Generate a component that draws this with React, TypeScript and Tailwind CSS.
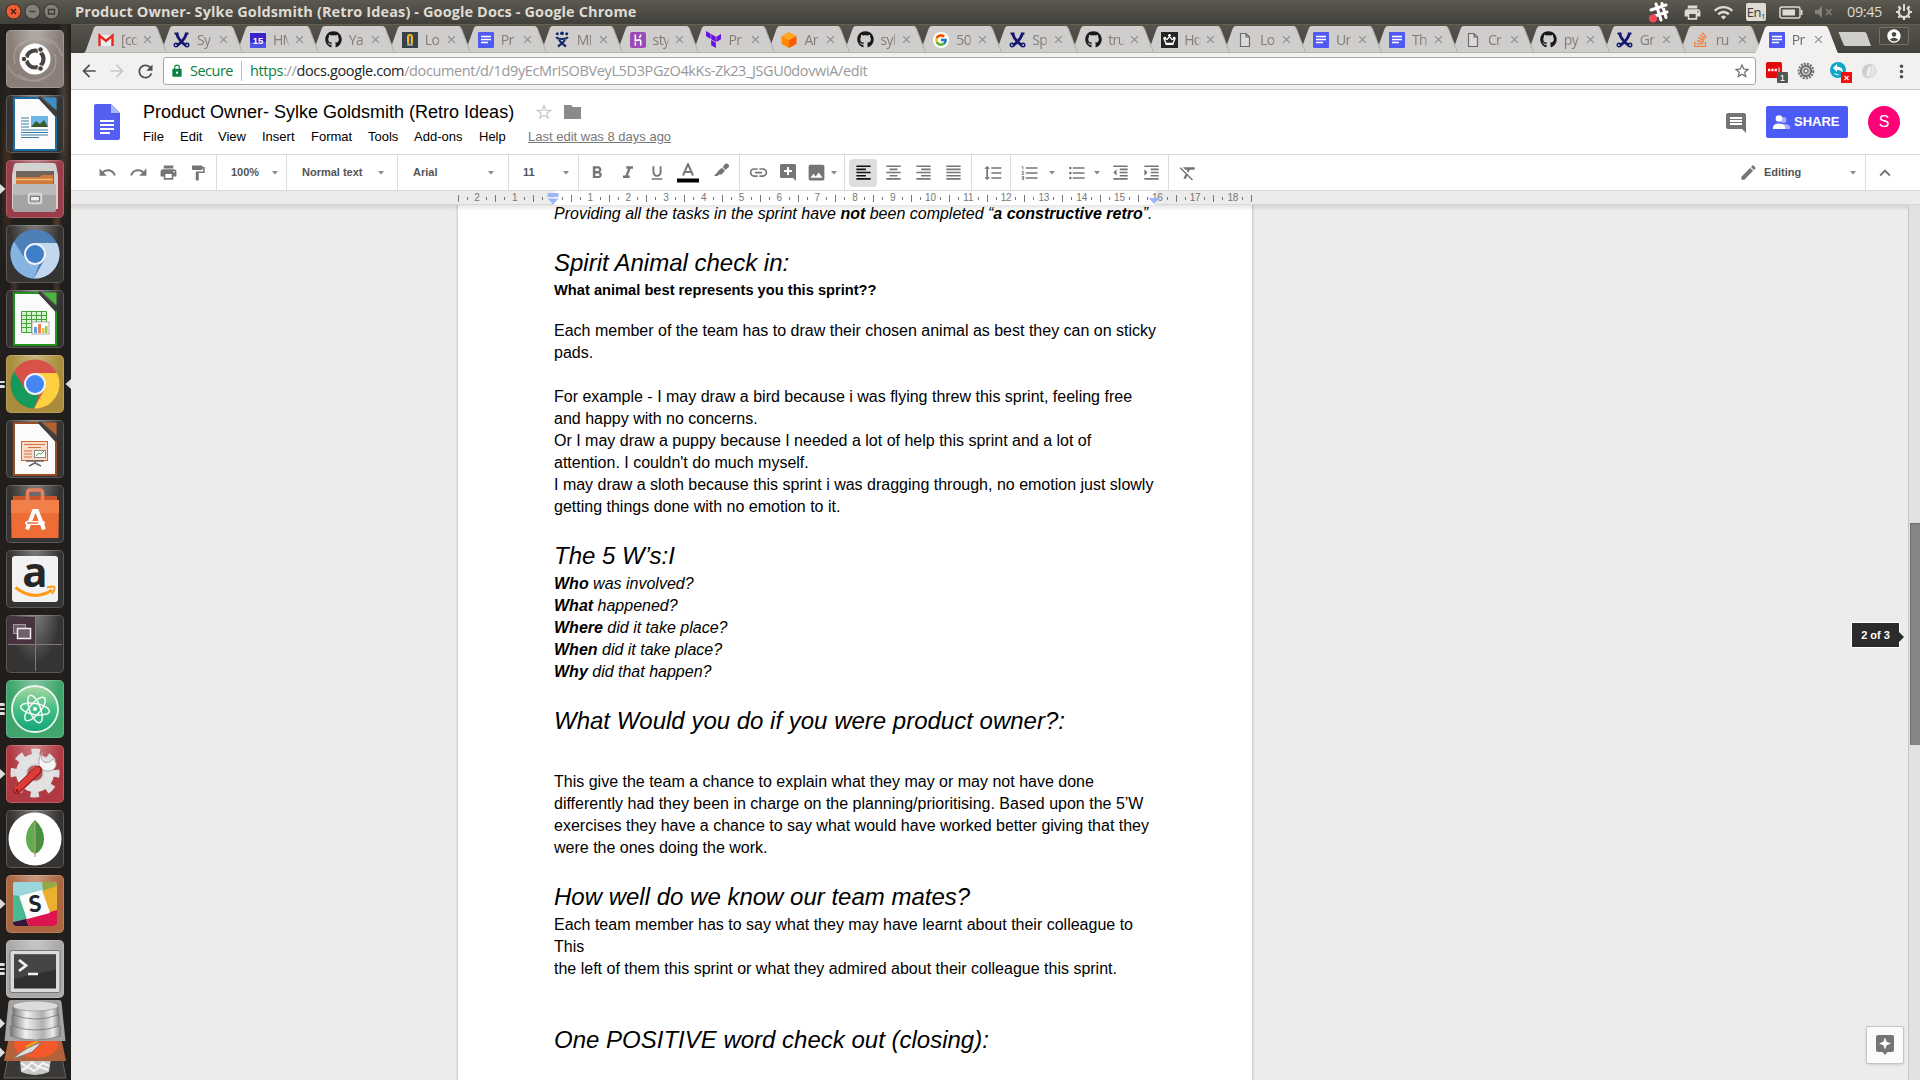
import React from "react";
import {
  MdUndo, MdRedo, MdPrint, MdFormatPaint, MdFormatBold, MdFormatItalic, MdFormatUnderlined, MdInsertLink,
  MdFormatAlignLeft, MdFormatAlignCenter, MdFormatAlignRight, MdFormatAlignJustify, MdFormatLineSpacing,
  MdFormatListNumbered, MdFormatListBulleted, MdFormatIndentDecrease, MdFormatIndentIncrease, MdFormatClear,
  MdEdit, MdStarBorder, MdFolder, MdInsertComment, MdArrowBack, MdArrowForward, MdRefresh, MdLock,
  MdMoreVert, MdInsertPhoto, MdClose, MdAccountCircle, MdKeyboardArrowUp, MdWifi,
} from "react-icons/md";
import { FaGithub } from "react-icons/fa";
import { FcGoogle } from "react-icons/fc";
import { SiTerraform, SiStackoverflow } from "react-icons/si";

const UI = "font-['Open_Sans','Noto_Sans',sans-serif]";

/* ---------- favicons ---------- */
const DocsFav = () => (
  <svg width="16" height="16" viewBox="0 0 16 16"><rect width="16" height="16" rx="1" fill="#4f5af5" /><path d="M3 4.500h10M3 7.500h10M3 10.500h7" stroke="#fff" strokeWidth="1.400" /></svg>
);
const GmailFav = () => (
  <svg width="16" height="16" viewBox="0 0 16 16"><rect x="1" y="3" width="14" height="11" fill="#eee" /><path d="M1.500 14V3.500L8 9l6.500-5.500V14" fill="none" stroke="#e02a20" strokeWidth="2.400" /></svg>
);
const XFav = () => (
  <svg width="17" height="16" viewBox="0 0 17 16" fill="none" stroke="#14186e"><path d="M3.500 1Q5 8 13 13.500M13.500 1Q12 8 4 13.500" strokeWidth="2.900" /><path d="M1.500 1.500h4M12 1.500h3.500" strokeWidth="2" /><circle cx="3" cy="13" r="1.800" strokeWidth="1.400" /><circle cx="14" cy="13" r="1.800" strokeWidth="1.400" /></svg>
);
const JiraFav = () => (
  <svg width="14" height="17" viewBox="0 0 14 17" fill="none" stroke="#14296b"><g fill="#14296b" stroke="none"><circle cx="7" cy="2.300" r="1.900" /><circle cx="2.300" cy="2.800" r="1.500" /><circle cx="11.700" cy="2.800" r="1.500" /></g><path d="M1.200 6Q2.500 8 7 8T12.800 6" strokeWidth="2.200" /><path d="M4 9Q6 12 11 15.500M10 9Q8 12 3 15.500" strokeWidth="2.200" /></svg>
);
const CalFav = () => (
  <svg width="16" height="17" viewBox="0 0 16 17"><path d="M0 2h16v14H0z" fill="#3b22c9" /><path d="M0 11h16v6H0z" fill="#4d55e8" /><path d="M1 0h14v2H1z" fill="#ddd" /><text x="8" y="12.500" textAnchor="middle" fontSize="9.500" fontWeight="700" fill="#fff" fontFamily="Liberation Sans, sans-serif">15</text></svg>
);
const LampFav = () => (
  <svg width="16" height="16" viewBox="0 0 16 16"><rect width="16" height="16" fill="#36414a" /><rect x="5" y="2" width="6" height="11" rx="3" fill="#f5b914" /><rect x="7" y="4" width="2" height="9" fill="#46608d" /><path d="M5 13h6" stroke="#ddd" /></svg>
);
const CubeFav = () => (
  <svg width="16" height="18" viewBox="0 0 16 18"><path d="M8 1l7.500 4L8 9 0.500 5z" fill="#ffa51f" /><path d="M0.500 5L8 9v8l-7.500-4z" fill="#ff8a00" /><path d="M15.500 5L8 9v8l7.500-4z" fill="#ff5a00" /></svg>
);
const CrownFav = () => (
  <svg width="17" height="16" viewBox="0 0 17 16"><rect width="17" height="16" fill="#262324" /><path d="M3 6.500l2 5h7l2-5-3 1-2.500-3L6 7.500z" fill="none" stroke="#fff" strokeWidth="1.300" /><path d="M4.500 12.500h8M8.500 2v3M7 3.300h3" stroke="#fff" strokeWidth="1.200" /><circle cx="4" cy="6" r="1.200" fill="#fff" /><circle cx="13" cy="6" r="1.200" fill="#fff" /></svg>
);
const PageFav = () => (
  <svg width="12" height="16" viewBox="0 0 12 16"><path d="M1.500 1.500h5.500l3.500 3.500v9.500h-9zM7 1.500V5h3.500" fill="#dcdad8" stroke="#6d6b69" strokeWidth="1.200" /></svg>
);
const HerokuFav = () => (
  <svg width="16" height="16" viewBox="0 0 16 16"><rect width="16" height="16" rx="2" fill="#9a4bb8" /><path d="M5.300 2.500v6.300q5-2 5.400.200v4.500M10.700 2.500q0 2-1.500 3.200M5.300 10.500v3" fill="none" stroke="#fff" strokeWidth="1.600" /></svg>
);
const GoogleFav = () => (
  <span className="flex h-4 w-4 items-center justify-center rounded-full bg-white"><FcGoogle size={14} /></span>
);
const Git = () => <FaGithub size={17} color="#191717" />;

const tabs: [React.ReactNode, string][] = [
  [<GmailFav />, "[co"], [<XFav />, "Sy"], [<CalFav />, "HM"], [<Git />, "Ya"], [<LampFav />, "Lo"], [<DocsFav />, "Pr"],
  [<JiraFav />, "MI"], [<HerokuFav />, "sty"], [<SiTerraform size={17} color="#6a10e0" />, "Pr"], [<CubeFav />, "Ar"],
  [<Git />, "syl"], [<GoogleFav />, "50"], [<XFav />, "Sp"], [<Git />, "tru"], [<CrownFav />, "Ho"], [<PageFav />, "Lo"],
  [<DocsFav />, "Ur"], [<DocsFav />, "Th"], [<PageFav />, "Cr"], [<Git />, "py"], [<XFav />, "Gr"],
  [<SiStackoverflow size={15} color="#f0803d" />, "ru"], [<DocsFav />, "Pr"],
];

function Tab({ icon, label, active, z }: { icon: React.ReactNode; label: string; active: boolean; z: number }) {
  return (
    <div className="relative h-[29px] w-[75.950px] shrink-0" style={{ zIndex: z }}>
      <svg className="absolute left-0 top-0 overflow-visible" width="90" height="29">
        <path d="M-1 29Q2 28 3 25L10.500 4Q11.500 1 14 1H71Q73.500 1 74.500 4L83 26Q84 29 87 29Z" fill={active ? "#f2f1f0" : "#d0cecd"} />
        {!active && <path d="M71 1Q73.500 1 74.500 4L83 26Q84 29 87 29" fill="none" stroke="#b0aeab" />}
        {!active && <path d="M2 27.500h82" stroke="#b5b3b0" />}
      </svg>
      <div className="relative flex h-[29px] items-center pl-[14px]">
        <span className="flex w-[18px] justify-center">{icon}</span>
        <span className={`ml-[6px] w-[17px] overflow-hidden whitespace-nowrap text-[14px] leading-[20px] tracking-[-0.600px] [mask-image:linear-gradient(to_right,black_75%,transparent)] ${active ? "text-[#6b6b6b]" : "text-[#807d7a]"}`}>{label}</span>
        <MdClose className="ml-[3px] shrink-0" size={13} color="#8d8b89" />
      </div>
    </div>
  );
}

/* ---------- launcher ---------- */
const Pips = ({ n }: { n: number }) =>
  n === 1 ? (
    <svg className="absolute -left-[6px] top-[23px]" width="6" height="12"><path d="M0 1l5.500 5L0 11z" fill="#ddd" /></svg>
  ) : (
    <div className="absolute -left-[6px] top-[23px] flex h-3 flex-col justify-center gap-[2px]">
      {Array.from({ length: n }, (_, i) => <div key={i} className="h-[2.500px] w-[5px] rounded-r-full bg-[#ddd]" />)}
    </div>
  );

function Tile({ tone, pips = 0, focus, children }: { tone: string; pips?: number; focus?: boolean; children: React.ReactNode }) {
  return (
    <div className={`relative h-[58px] w-[58px] shrink-0 rounded-[5px] shadow-[inset_0_0_0_1px_rgba(255,255,255,0.18)] ${tone}`}>
      <div className="absolute inset-0 rounded-[5px] bg-[radial-gradient(ellipse_at_50%_-10%,rgba(255,255,255,0.38),transparent_62%)]" />
      <svg className="relative" width="58" height="58" viewBox="0 0 58 58">{children}</svg>
      {pips > 0 && <Pips n={pips} />}
      {focus && <svg className="absolute -right-[7px] top-[23px]" width="6" height="12"><path d="M6 1L0.500 6 6 11z" fill="#ddd" /></svg>}
    </div>
  );
}

const Office = ({ c, d, children }: { c: string; d: string; children: React.ReactNode }) => (
  <>
    <path d="M8 3h26l16 18v34H8z" fill="#fbfbfb" stroke={c} strokeWidth="2" />
    <path d="M37 2.500h13.500v13z" fill={d} />
    <path d="M33 2l18 19" stroke="#3c3c3c" strokeWidth="3" />
    {children}
  </>
);
const ChromeDisc = ({ r, y, g, b }: { r: string; y: string; g: string; b: string }) => (
  <>
    <circle cx="29" cy="29" r="24.500" fill={r} />
    <path d="M29 18H50.900A24.500 24.500 0 0 1 28 53.500L38.500 34.500Z" fill={y} />
    <path d="M8 16.500L19.500 34.500Q24 41 33 39.500L28 53.500A24.500 24.500 0 0 1 8 16.500Z" fill={g} />
    <circle cx="29" cy="29" r="11" fill="#eef2fa" />
    <circle cx="29" cy="29" r="9" fill={b} />
  </>
);

const DARK = "bg-[#363432]";

function Launcher() {
  return (
    <div className="flex w-[71px] shrink-0 flex-col overflow-hidden bg-[#211e1b] bg-[radial-gradient(ellipse_at_90%_8%,#4a403a_0,transparent_9%),radial-gradient(ellipse_at_10%_14%,#4a2f22_0,transparent_8%),radial-gradient(ellipse_at_80%_20%,#57402f_0,transparent_7%),radial-gradient(ellipse_at_20%_25%,#47352a_0,transparent_6%),radial-gradient(ellipse_at_80%_27%,#3a302a_0,transparent_5%)] pl-[6px] pt-[6px]">
      <div className="flex flex-col gap-[7px]">
        <Tile tone="bg-[#8b7f79]">
          <g fill="none" stroke="#b5aaa4" strokeOpacity=".6" strokeWidth="1.500"><path d="M9 34Q4 12 29 8Q50 6 56 26M49 24Q54 46 30 50Q10 52 2 36M14 16Q28 2 46 14M44 44Q30 58 12 44" /></g>
          <circle cx="29" cy="29" r="15.500" fill="#fff" />
          <circle cx="29" cy="29" r="8.500" fill="none" stroke="#4a423e" strokeWidth="4" strokeDasharray="15.300 2.500" strokeDashoffset="-10" />
          <g fill="#4a423e" stroke="#fff" strokeWidth="1"><circle cx="18" cy="29" r="2.800" /><circle cx="34.500" cy="19.500" r="2.800" /><circle cx="34.500" cy="38.500" r="2.800" /></g>
        </Tile>
        <Tile tone={DARK}>
          <Office c="#1b6ba5" d="#3c8fc8">
            <path d="M15 23h8M15 26h8M15 29h8M15 32h8M15 35h27M15 37.500h27M15 40h27M15 42.500h18" stroke="#3a7fae" strokeWidth="1.200" />
            <rect x="25" y="21" width="17" height="11" fill="#6cb7e8" /><path d="M25 32l5-6 4 3 4-4 4 7z" fill="#3c5b2c" />
          </Office>
        </Tile>
        <Tile tone="bg-[#983d49]" pips={1}>
          <path d="M8 5q.3-2 3-2h36q2.500 0 3 2l2 10v34H6V15z" fill="#d2d2d1" /><path d="M10 11h38v14H10z" fill="#70655e" />
          <path d="M10 17h24l2-2h11v12H10z" fill="#d27a3c" /><path d="M10 19.500h37" stroke="#f3b878" strokeWidth="1.500" />
          <path d="M7 24h43v26q0 2-2 2H9q-2 0-2-2z" fill="#a4a4a3" /><path d="M7 24h43v11H7z" fill="#bababa" />
          <rect x="22.500" y="33.500" width="13" height="10" rx="2.500" fill="#bdbdbd" stroke="#ddd" strokeWidth="1.500" /><rect x="24.500" y="36.500" width="9" height="4.500" fill="#eee" stroke="#777" />
        </Tile>
        <Tile tone={DARK}><ChromeDisc r="#4e7fb7" y="#c3d8ee" g="#86b4e0" b="#3f7fc8" /></Tile>
        <Tile tone={DARK}>
          <Office c="#22941b" d="#48b83c">
            <path d="M15.500 21.500h25v21h-25zM15.500 25.500h25M15.500 29.500h25M15.500 33.500h25M15.500 37.500h25M20.500 21.500v21M25.500 21.500v21M30.500 21.500v21M35.500 21.500v21" fill="#d9f2d0" stroke="#3fa435" />
            <rect x="26" y="32" width="17" height="12" fill="#fff" stroke="#aaa" /><path d="M28 43v-6h3v6z" fill="#5a9edb" /><path d="M32 43v-9h3v9z" fill="#e8825a" /><path d="M36 43v-5h2.500v5z" fill="#eac03c" /><path d="M39 43v-7h2.500v7z" fill="#8bcf5a" />
          </Office>
        </Tile>
        <Tile tone="bg-[#a98d3c]" pips={2} focus><ChromeDisc r="#d9524a" y="#fdd03f" g="#169a5b" b="#4486f4" /></Tile>
        <Tile tone={DARK}>
          <Office c="#984d24" d="#b5602f">
            <rect x="15.500" y="21.500" width="26" height="19" fill="#fbdcc8" stroke="#c8673a" /><path d="M18 24.500h21M22 27.500h13M18 31h8M18 34h8M18 37h8" stroke="#d07146" strokeWidth="1.200" />
            <rect x="28.500" y="30.500" width="11" height="7" fill="#fff" stroke="#888" /><path d="M30 36l3-3 2 1 3-3" fill="none" stroke="#44a535" /><path d="M20 41h18M29 41v2l-6 3M29 43l6 3" fill="none" stroke="#666" strokeWidth="1.500" />
          </Office>
        </Tile>
        <Tile tone={DARK}>
          <path d="M7 11h44v6H7z" fill="#c9532b" /><path d="M5 15h48l-.5 38H5.500z" fill="#ee6c35" /><path d="M5 15h48v13H5z" fill="#f27e48" />
          <path d="M21.500 18V8q0-3 3-3h9q3 0 3 3v10" fill="none" stroke="#e9805d" strokeWidth="3.500" />
          <path d="M21 44.500L28 26h3l7 18.500" fill="none" stroke="#fff" strokeWidth="4" /><rect x="19" y="36" width="20" height="4" rx="2" fill="#fff" /><path d="M21 38h11" stroke="#ee6c35" strokeWidth="1.500" />
        </Tile>
        <Tile tone={DARK}>
          <rect x="6" y="6" width="46" height="46" rx="3" fill="#f2f2f2" />
          <text x="29" y="37" textAnchor="middle" fontSize="42" fontWeight="700" fill="#262626" fontFamily="Open Sans, sans-serif">a</text>
          <path d="M9.500 37.500Q28 52 46 40" fill="none" stroke="#ff9a12" strokeWidth="3" /><path d="M41 37.500q7-2 7.500 0T46 44" fill="none" stroke="#ff9a12" strokeWidth="2" />
        </Tile>
        <Tile tone={DARK}>
          <path d="M2 2h27v27H2z" fill="#47333e" /><path d="M29.500 2v54M2 29.500h54" stroke="#81797c" strokeWidth="1" />
          <rect x="7.500" y="9.500" width="12" height="9" fill="#6b5b64" stroke="#a49ba0" /><rect x="11.500" y="13.500" width="13" height="10" fill="#715f69" stroke="#f0f0f0" strokeWidth="1.500" />
        </Tile>
        <Tile tone="bg-[#3fa56d]" pips={3}>
          <linearGradient id="atom" x1="0" y1="0" x2="0" y2="1"><stop offset="0" stopColor="#a9d8a0" /><stop offset=".55" stopColor="#3dbb85" /><stop offset="1" stopColor="#14a578" /></linearGradient>
          <circle cx="29" cy="29" r="23" fill="url(#atom)" stroke="#e9f5ee" strokeWidth="1.800" /><g fill="none" stroke="#f2fbf5" strokeWidth="1.500"><ellipse cx="29" cy="29" rx="14.500" ry="5.500" transform="rotate(10 29 29)" /><ellipse cx="29" cy="29" rx="14.500" ry="5.500" transform="rotate(70 29 29)" /><ellipse cx="29" cy="29" rx="14.500" ry="5.500" transform="rotate(-50 29 29)" /></g><circle cx="29" cy="29" r="2" fill="#fff" />
        </Tile>
        <Tile tone="bg-[#b03a42]" pips={1}>
          <circle cx="29" cy="28" r="21" fill="none" stroke="#dedede" strokeWidth="7" strokeDasharray="8.250 8.250" strokeDashoffset="4.100" /><circle cx="29" cy="28" r="13.500" fill="none" stroke="#e2e2e2" strokeWidth="11" /><circle cx="29" cy="28" r="8" fill="none" stroke="#bbb" />
          <path d="M37 20l-7 8" stroke="#ddd" strokeWidth="5" /><path d="M37 7q-4 6 1 10 5 2 9-3 5 4 2 9-5 5-12 2l-4-4q-1-10 4-14z" fill="#f4f4f4" stroke="#999" strokeWidth=".8" />
          <path d="M11 45L32 25" stroke="#9f1f1f" strokeWidth="8.500" strokeLinecap="round" /><path d="M11 44.500L31.500 25" stroke="#dc3c38" strokeWidth="6" strokeLinecap="round" /><circle cx="11" cy="45.500" r="1.500" fill="#8d1616" />
        </Tile>
        <Tile tone={DARK}>
          <circle cx="29" cy="29" r="26.500" fill="#fff" /><path d="M29 10Q38 18 38 29T29 44z" fill="#4a8f40" /><path d="M29 10Q20 18 20 29T29 44z" fill="#62ac4f" /><path d="M29 12v35" stroke="#a9a27c" strokeWidth="1.300" />
        </Tile>
        <Tile tone="bg-[#ab6740]" pips={1}>
          <clipPath id="sl"><rect x="7" y="7" width="44" height="44" rx="3" /></clipPath>
          <g clipPath="url(#sl)"><path d="M7 7h44v44H7z" fill="#fff" /><path d="M7 7h30l4 8-29 8-5-3z" fill="#9ad6dc" /><path d="M36 7h15v5l-14 4z" fill="#95a846" /><path d="M36 16l15-5v25l-7 2z" fill="#ebb02d" /><path d="M7 20l6 1 8 23-14 3z" fill="#4bb893" /><path d="M7 47l13-3 3 7H7z" fill="#36163b" /><path d="M20 44l31-9v16H23z" fill="#dc1450" /><path d="M14 21l22-6 8 23-23 6z" fill="#fafafa" /></g>
          <text x="29" y="37" textAnchor="middle" fontSize="23" fontWeight="900" fill="#23252d" fontFamily="Lato, sans-serif" transform="rotate(-6 29 29)">S</text>
        </Tile>
        <Tile tone="bg-[#aaa9a9]" pips={3}>
          <rect x="4" y="10.500" width="50" height="42" rx="2" fill="#dbdbdb" stroke="#777" /><rect x="8" y="14.500" width="42" height="34" fill="#303030" /><path d="M8 14.500h42v15L8 39z" fill="#454545" />
          <path d="M13 20l7 5.500-7 5.500" fill="none" stroke="#f2f2f2" strokeWidth="2.800" /><path d="M22 34h10" stroke="#f2f2f2" strokeWidth="2.500" />
        </Tile>
      </div>
      <svg className="-ml-[6px] mt-px shrink-0" width="71" height="81" viewBox="0 0 71 81">
        <path d="M9 54H61L66 79H4z" fill="#3b3937" stroke="#666" /><path d="M20 59h31l-2 14q-14 6-28 0z" fill="#c9c9c7" /><path d="M21 64l6 4 5-5 6 5 5-4 6 3M22 71l6-3 6 4 6-4 8 3" stroke="#f5f5f5" fill="none" strokeWidth="2" />
        <path d="M9 38H61L66 62H4z" fill="#b4623c" /><ellipse cx="36" cy="46" rx="22" ry="13" fill="#f4592b" /><path d="M14 59q10-10 28-16l-10 10-16 6z" fill="#ddd" stroke="#777" /><path d="M26 48l12-6" stroke="#f5a320" strokeWidth="2.500" />
        <linearGradient id="disk"><stop offset="0" stopColor="#777" /><stop offset=".3" stopColor="#f0f0f0" /><stop offset=".65" stopColor="#b0b0b0" /><stop offset=".85" stopColor="#ececec" /><stop offset="1" stopColor="#888" /></linearGradient>
        <path d="M11 1H59Q61 1 61.500 3L65.500 42H4.500L8.500 3Q9 1 11 1z" fill="#a5a4a4" />
        <g fill="url(#disk)" stroke="#777" strokeWidth=".8"><path d="M10.500 27v10q24.500 8 50 0V27z" /><path d="M12 16v11q24 8 47 0V16z" /><path d="M13 7v9q23 8 45 0V7z" /></g>
        <ellipse cx="35.500" cy="7" rx="22.500" ry="5" fill="#dcdcdc" stroke="#999" strokeWidth=".8" />
        <path d="M0 19.500l5 5-5 5zM0 48.500l5 5-5 5z" fill="#ddd" />
      </svg>
    </div>
  );
}

/* ---------- docs toolbar ---------- */
const Caret = () => <svg width="6" height="4"><path d="M0 0h6L3 3.500z" fill="#888" /></svg>;
const Sep = () => <div className="h-[35px] w-px shrink-0 bg-[#dcdcdc]" />;
const Cell = ({ w, children }: { w: string; children?: React.ReactNode }) => <div className={`flex h-[35px] shrink-0 items-center justify-center ${w}`}>{children}</div>;
const G = "#757575";

function Toolbar() {
  return (
    <div className="flex h-[36px] items-center border-b border-[#d9d9d9] bg-white pl-[21.500px] text-[11px] font-bold text-[#555]">
      <Cell w="w-[30.500px]"><MdUndo size={19} color={G} /></Cell>
      <Cell w="w-[30px]"><MdRedo size={19} color={G} /></Cell>
      <Cell w="w-[30px]"><MdPrint size={19} color={G} /></Cell>
      <Cell w="w-[33px]"><span className="-ml-[3px]"><MdFormatPaint size={18} color={G} /></span></Cell>
      <Sep />
      <div className="flex w-[69px] items-center justify-between pl-[14px] pr-[8px]"><span>100%</span><Caret /></div>
      <Sep />
      <div className="flex w-[110px] items-center justify-between pl-[15px] pr-[13px]"><span>Normal text</span><Caret /></div>
      <Sep />
      <div className="flex w-[110px] items-center justify-between pl-[15px] pr-[14px]"><span>Arial</span><Caret /></div>
      <Sep />
      <div className="flex w-[69px] items-center justify-between pl-[14px] pr-[9px]"><span>11</span><Caret /></div>
      <Sep />
      <Cell w="w-[34px]"><span className="ml-px"><MdFormatBold size={20} color={G} /></span></Cell>
      <Cell w="w-[29px]"><MdFormatItalic size={20} color={G} /></Cell>
      <Cell w="w-[30px]"><MdFormatUnderlined size={18} color={G} /></Cell>
      <Cell w="w-[32px]">
        <svg width="22" height="20" viewBox="0 0 22 20"><path d="M6 12.500L11 1l5 11.500M7.800 9h6.400" fill="none" stroke={G} strokeWidth="1.900" /><path d="M0 15.500h22v4H0z" fill="#000" /></svg>
      </Cell>
      <Cell w="w-[35px]"><svg className="-mt-[5px]" width="16" height="15" viewBox="0 0 16 15" fill={G}><path d="M10.500 1.500Q12.500-.5 14.300 1.300T13.800 5l-2.300 2L8.800 4z" /><path d="M8 4.800l3 3-3.500 3.700H5L3.500 13H0l4-4.500V8z" /></svg></Cell>
      <Sep />
      <Cell w="w-[36px]"><MdInsertLink size={21} color={G} /></Cell>
      <Cell w="w-[24px]"><svg width="16" height="17" viewBox="0 0 16 17"><path d="M1.500 0h13Q16 0 16 1.500V17l-3-3H1.500Q0 14 0 12.500v-11Q0 0 1.500 0z" fill={G} /><path d="M8 3v8M4 7h8" stroke="#fff" strokeWidth="2" /></svg></Cell>
      <Cell w="w-[32px]"><MdInsertPhoto size={21} color={G} /></Cell>
      <div className="w-[12px]"><span className="-ml-px block"><Caret /></span></div>
      <Sep />
      <div className="ml-[4px] mr-px flex h-7 w-7 items-center justify-center rounded-sm bg-[#dedede]"><MdFormatAlignLeft size={19} color="#111" /></div>
      <Cell w="w-[30px]"><MdFormatAlignCenter size={19} color={G} /></Cell>
      <Cell w="w-[30px]"><MdFormatAlignRight size={19} color={G} /></Cell>
      <Cell w="w-[33px]"><span className="-ml-[2px]"><MdFormatAlignJustify size={19} color={G} /></span></Cell>
      <Sep />
      <Cell w="w-[38px]"><span className="ml-[3px]"><MdFormatLineSpacing size={20} color={G} /></span></Cell>
      <Sep />
      <Cell w="w-[36px]"><span className="ml-[2px]"><MdFormatListNumbered size={20} color={G} /></span></Cell>
      <div className="w-[16px]"><span className="ml-[2px] block"><Caret /></span></div>
      <Cell w="w-[27px]"><MdFormatListBulleted size={20} color={G} /></Cell>
      <div className="w-[16px]"><span className="ml-[4px] block"><Caret /></span></div>
      <Cell w="w-[29px]"><MdFormatIndentDecrease size={19} color={G} /></Cell>
      <Cell w="w-[33px]"><MdFormatIndentIncrease size={19} color={G} /></Cell>
      <Sep />
      <Cell w="w-[37px]"><MdFormatClear size={20} color={G} /></Cell>
      <div className="ml-auto flex items-center">
        <MdEdit size={19} color={G} />
        <span className="ml-[6px] w-[86px]">Editing</span>
        <Caret />
        <div className="w-[9px]" />
        <Sep />
        <Cell w="w-[54px]"><span className="-ml-[17px]"><MdKeyboardArrowUp size={22} color={G} /></span></Cell>
      </div>
    </div>
  );
}

function Ruler() {
  const cells = Array.from({ length: 21 }, (_, i) => i - 2);
  return (
    <div className="relative flex h-[14px] shrink-0 border-b border-[#d8d8d8] bg-[#ececec] pl-[386.500px]">
      <div className="absolute left-[483px] top-0 h-[14px] w-[601px] bg-white" />
      <div className="relative flex h-[14px] items-center">
        {cells.map((n) => (
          <div key={n} className="relative flex h-[14px] w-[37.800px] items-center">
            <div className="h-[7px] w-px bg-[#777]" />
            <div className="ml-[8px] h-[3px] w-px bg-[#777]" />
            <div className="flex-1 text-center text-[10px] leading-[14px] tracking-[-0.200px] text-[#777]">{n === 0 ? "" : Math.abs(n)}</div>
            <div className="mr-[8px] h-[3px] w-px bg-[#777]" />
          </div>
        ))}
        <div className="h-[7px] w-px bg-[#777]" />
      </div>
      <svg className="absolute left-[476px] top-[2px]" width="12" height="12"><path d="M0.500 0h11v4H0.500zM0.500 5.500h11L6 11.500z" fill="#9db7fb" /></svg>
      <svg className="absolute left-[1077px] top-[7px]" width="12" height="7"><path d="M0.500 0h11L6 6z" fill="#9db7fb" /></svg>
    </div>
  );
}

/* ---------- document ---------- */
const P = ({ c = "", children }: { c?: string; children: React.ReactNode }) => <p className={`h-[22px] whitespace-nowrap text-[16px] leading-[22px] ${c}`}>{children}</p>;
const H = ({ c, children }: { c: string; children: React.ReactNode }) => <h2 className={`h-[34px] whitespace-nowrap text-[24px] italic leading-[34px] ${c}`}>{children}</h2>;

function Page() {
  return (
    <div className="ml-[387px] h-[900px] w-[794px] bg-white pl-[96px] text-black shadow-[0_0_2px_1px_rgba(0,0,0,0.15)]">
      <P c="-mt-[2px] italic">Providing all the tasks in the sprint have <b>not</b> been completed “<b>a constructive retro</b>”.</P>
      <H c="mt-[21px]">Spirit Animal check in:</H>
      <p className="h-[20px] text-[14.667px] font-bold leading-[20px]">What animal best represents you this sprint??</p>
      <P c="mt-[20px]">Each member of the team has to draw their chosen animal as best they can on sticky</P>
      <P>pads.</P>
      <P c="mt-[22px]">For example - I may draw a bird because i was flying threw this sprint, feeling free</P>
      <P>and happy with no concerns.</P>
      <P>Or I may draw a puppy because I needed a lot of help this sprint and a lot of</P>
      <P>attention. I couldn't do much myself.</P>
      <P>I may draw a sloth because this sprint i was dragging through, no emotion just slowly</P>
      <P>getting things done with no emotion to it.</P>
      <H c="mt-[21px]">The 5 W’s:I</H>
      <P c="italic"><b>Who</b> was involved?</P>
      <P c="italic"><b>What</b> happened?</P>
      <P c="italic"><b>Where</b> did it take place?</P>
      <P c="italic"><b>When</b> did it take place?</P>
      <P c="italic"><b>Why</b> did that happen?</P>
      <H c="mt-[21px]">What Would you do if you were product owner?:</H>
      <P c="mt-[33px]">This give the team a chance to explain what they may or may not have done</P>
      <P>differently had they been in charge on the planning/prioritising. Based upon the 5’W</P>
      <P>exercises they have a chance to say what would have worked better giving that they</P>
      <P>were the ones doing the work.</P>
      <H c="mt-[21px]">How well do we know our team mates?</H>
      <P>Each team member has to say what they may have learnt about their colleague to</P>
      <P>This</P>
      <P>the left of them this sprint or what they admired about their colleague this sprint.</P>
      <H c="mt-[43px]">One POSITIVE word check out (closing):</H>
    </div>
  );
}

function TitleBar() {
  return (
    <div className={`flex h-[24px] shrink-0 items-center bg-gradient-to-b from-[#5c5950] to-[#403f3a] pl-[5px] ${UI}`}>
      <svg width="56" height="18" viewBox="0 0 56 18" strokeWidth="1">
        <circle cx="8.500" cy="8.500" r="7.500" fill="#ee5d33" stroke="#3a2a20" /><path d="M6 6l5 5M11 6l-5 5" stroke="#4a1b0c" strokeWidth="1.300" />
        <circle cx="27.500" cy="8.500" r="7.500" fill="#827f77" stroke="#35332f" /><path d="M24.500 8.500h6" stroke="#3b3935" strokeWidth="1.300" />
        <circle cx="46.500" cy="8.500" r="7.500" fill="#827f77" stroke="#35332f" /><path d="M43.500 6.500h6v4.500h-6z" fill="none" stroke="#3b3935" strokeWidth="1.300" />
      </svg>
      <span className="ml-[14px] whitespace-nowrap text-[14.500px] font-bold leading-[24px] tracking-[0.110px] text-[#dfdbd2]">Product Owner- Sylke Goldsmith (Retro Ideas) - Google Docs - Google Chrome</span>
      <div className="ml-auto flex items-center text-[#dfdbd2]">
        <svg width="21" height="21" viewBox="0 0 21 21"><path d="M8 2l5 16M14 1.500l4 14M3 8l15-5M4 15l15-5" stroke="#fff" strokeWidth="3" strokeLinecap="round" /><circle cx="5" cy="16.500" r="4" fill="#f04a5a" /></svg>
        <span className="ml-[14px]"><MdPrint size={19} /></span>
        <span className="ml-[11px]"><MdWifi size={21} /></span>
        <span className="ml-[12px] flex h-[18px] w-[20px] items-center justify-center rounded-[2px] bg-[#dfdbd2] text-[13px] leading-none tracking-[-0.500px] text-[#3c3b37]">En<span className="mt-2 text-[8px]">1</span></span>
        <svg className="ml-[13px]" width="24" height="13" viewBox="0 0 24 13"><rect x="1" y="1" width="20" height="11" rx="2" fill="none" stroke="#dfdbd2" strokeWidth="1.500" /><path d="M3.500 3.500H16v6H3.500zM22 4h1.500v5H22z" fill="#dfdbd2" /></svg>
        <svg className="ml-[12px]" width="18" height="12" viewBox="0 0 18 12"><path d="M0 4h3l4-4v12L3 8H0z" fill="#85827a" /><path d="M11 3l5.500 6M16.500 3L11 9" stroke="#85827a" strokeWidth="1.500" /></svg>
        <span className="ml-[14px] w-[38px] text-[14.500px] leading-[24px] tracking-[-0.400px]">09:45</span>
        <svg className="ml-[10px] mr-[7px]" width="18" height="18" viewBox="0 0 18 18" fill="none" stroke="#dfdbd2"><path d="M6 4.700A5.200 5.200 0 1 0 12 4.700" strokeWidth="2.200" /><path d="M9 1v7" strokeWidth="2" /><path d="M3.300 3.300l2 2M14.700 3.300l-2 2M1 9h3M17 9h-3M3.300 14.700l2-2M14.700 14.700l-2-2M9 14v3" strokeWidth="2.200" /></svg>
      </div>
    </div>
  );
}

export default function App() {
  return (
    <div className="flex h-[1080px] w-[1920px] flex-col overflow-hidden bg-[#ececec] font-['Liberation_Sans',Arial,sans-serif]">
      <TitleBar />
      <div className="flex min-h-0 flex-1">
        <Launcher />
        <div className="flex w-[1849px] flex-col">
          <div className={`relative flex h-[29px] shrink-0 overflow-hidden border-t border-[#63614f] bg-gradient-to-b from-[#55534b] to-[#42413b] pl-[12px] ${UI}`}>
            {tabs.map(([icon, label], i) => <Tab key={i} icon={icon} label={label} active={i === 22} z={i === 22 ? 40 : 30 - i} />)}
            <svg className="ml-[8px] mt-[6px] shrink-0" width="34" height="17"><path d="M0.500 1h26q1.500 0 2 1.500L33 15H8q-2 0-2.500-1.500z" fill="#d0cecd" /></svg>
            <div className="ml-[7px] mt-[2px] flex h-[18px] w-[30px] items-center justify-center rounded-[2px] border border-[#74726a] bg-[#4b4943]"><MdAccountCircle size={16} color="#fff" /></div>
          </div>
          <div className={`flex h-[37px] shrink-0 items-center border-b border-[#c9c7c5] bg-[#f2f1f0] pl-[8px] ${UI}`}>
            <MdArrowBack size={20} color="#4f4f4f" />
            <span className="ml-[8px]"><MdArrowForward size={20} color="#c9c8c7" /></span>
            <span className="ml-[8px]"><MdRefresh size={21} color="#4f4f4f" /></span>
            <div className="ml-[7px] flex h-[28px] w-[1593px] items-center rounded-[3px] border border-[#a9a7a5] bg-white pl-[6px] text-[14.500px]">
              <MdLock size={14} color="#0b8043" />
              <span className="ml-[6px] w-[42px] whitespace-nowrap tracking-[-0.500px] text-[#0b8043]">Secure</span>
              <div className="ml-[9px] h-[20px] w-px bg-[#bbb]" />
              <span className="ml-[8px] whitespace-nowrap tracking-[-0.370px] text-[#999]"><span className="text-[#0b8043]">https</span>://<span className="text-[#222]">docs.google.com</span>/document/d/1d9yEcMrISOBVeyL5D3PGzO4kKs-Zk23_JSGU0dovwiA/edit</span>
              <span className="ml-auto mr-[4px]"><MdStarBorder size={18} color="#6b6b6b" /></span>
            </div>
            <svg className="ml-[9px]" width="24" height="24" viewBox="0 0 24 24"><rect x="1" y="3" width="16" height="16" rx="1.500" fill="#e20a0a" /><path d="M3 11h9" stroke="#fff" strokeWidth="2.600" strokeDasharray="2.300 1" /><path d="M14 8.500v5" stroke="#fff" strokeWidth="1" /><rect x="12" y="13" width="11" height="11" rx="1" fill="#555" /><text x="17.500" y="22" textAnchor="middle" fontSize="9.500" fill="#fff" fontFamily="Liberation Sans, sans-serif">1</text></svg>
            <svg className="ml-[8px]" width="18" height="18" viewBox="0 0 18 18" fill="none"><circle cx="9" cy="9" r="7.300" stroke="#6b6b6b" strokeWidth="2" strokeDasharray="2 1.200" /><circle cx="9" cy="9" r="5.300" fill="#bbb" stroke="#555" strokeWidth="1.500" /><circle cx="9" cy="9" r="2" fill="#eee" stroke="#555" /></svg>
            <svg className="ml-[14px]" width="24" height="24" viewBox="0 0 24 24"><circle cx="9" cy="11" r="8" fill="#0ba6c8" /><path d="M4 9l4-4v2.500q6 0 6 6-2-3-6-2.500V13zM4 14q3 3 7 2" fill="#fff" /><rect x="12" y="13" width="11" height="11" fill="#f40d0d" /><path d="M15.500 17l4 4M19.500 17l-4 4" stroke="#fff" strokeWidth="1.100" /></svg>
            <svg className="ml-[7px]" width="18" height="18" viewBox="0 0 18 18" fill="none"><path d="M12 2Q2 2 2 9t6 7Q4 9 12 2z" fill="#cdcdcd" /><path d="M7 16q9-1 9-7T10 2q4 7-3 14z" fill="#e4e4e4" stroke="#c4c4c4" strokeWidth=".6" /></svg>
            <span className="ml-[13px]"><MdMoreVert size={21} color="#4f4f4f" /></span>
          </div>

          <div className="flex h-[65px] shrink-0 border-b border-[#d9d9d9] bg-white">
            <svg className="ml-[23px] mt-[14px] shrink-0" width="26" height="36" viewBox="0 0 26 36"><path d="M2 0h15l9 9v25q0 2-2 2H2q-2 0-2-2V2Q0 0 2 0z" fill="#5560f3" /><path d="M17 0l9 9h-9z" fill="#a9b8fb" /><path d="M17 9h9v8z" fill="#4f59ea" /><path d="M6 17h14M6 21h14M6 25h14M6 29h10" stroke="#fff" strokeWidth="1.800" /></svg>
            <div className="ml-[23px]">
              <div className="mt-[11px] flex h-[22px] items-center">
                <span className="w-[391px] whitespace-nowrap text-[18px] leading-[22px] text-black">Product Owner- Sylke Goldsmith (Retro Ideas)</span>
                <svg className="ml-[2px]" width="16" height="16" viewBox="0 0 16 16"><path d="M8 1.500l1.600 4.700H15l-4.300 3 1.600 5L8 11.200l-4.300 3 1.600-5L1 6.200h5.400z" fill="none" stroke="#c4c4c4" strokeWidth="1.100" /></svg>
                <svg className="ml-[12px]" width="17" height="14" viewBox="0 0 17 14"><path d="M0 0h7l2 2h8v12H0z" fill="#8a8a8a" /></svg>
              </div>
              <div className="mt-[6px] flex h-[16px] whitespace-nowrap text-[13px] leading-[16px] text-black">
                <span className="w-[37px]">File</span><span className="w-[38px]">Edit</span><span className="w-[44px]">View</span><span className="w-[49px]">Insert</span><span className="w-[57px]">Format</span><span className="w-[46px]">Tools</span><span className="w-[65px]">Add-ons</span><span className="w-[49px]">Help</span>
                <span className="text-[#777] underline">Last edit was 8 days ago</span>
              </div>
            </div>
            <div className="ml-auto flex items-center pr-[20px]">
              <span className="mt-[2px]"><MdInsertComment size={24} color="#757575" /></span>
              <div className="ml-[18px] flex h-[32px] w-[82px] items-center rounded-[2px] bg-[#4d5bf5] pl-[7px] text-[13px] font-bold text-white">
                <svg width="17" height="14" viewBox="0 0 17 14"><g fill="#a6adfa"><circle cx="10.500" cy="5" r="3" /><path d="M8 14q0-5 4-5 5 .5 5 3v2z" /></g><g fill="#fff"><circle cx="6" cy="3.500" r="3.300" /><path d="M0 14v-2q.5-3.500 6-3.500t6 3.500v2z" /></g></svg>
                <span className="ml-[4px]">SHARE</span>
              </div>
              <div className="ml-[20px] flex h-[32px] w-[32px] items-center justify-center rounded-full bg-[#ff0076] text-[16px] text-white">S</div>
            </div>
          </div>
          <Toolbar />
          <Ruler />
          <div className="flex min-h-0 flex-1">
            <div className="relative flex-1 overflow-hidden">
              <Page />
              <div className="absolute left-0 top-0 h-[6px] w-full bg-gradient-to-b from-black/10 to-transparent" />
              <div className="absolute left-[1780px] top-[417px] flex h-[26px] w-[49px] items-center justify-center border border-white bg-[#2b2b2b] text-[11px] font-bold text-white">2 of 3
                <svg className="absolute -right-[5px] top-[9px]" width="5" height="10"><path d="M0 0l5 5-5 5z" fill="#2b2b2b" /></svg>
              </div>
              <div className="absolute left-[1795px] top-[821px] flex h-[38px] w-[38px] items-center justify-center rounded-[2px] border border-[#c4c4c4] bg-[#fafafa] shadow-sm">
                <svg width="18" height="20" viewBox="0 0 18 20"><path d="M2 0h14q2 0 2 2v13q0 2-2 2h-4.500L9 20l-2.500-3H2q-2 0-2-2V2Q0 0 2 0z" fill="#757575" /><path d="M9 2.500l1.700 4.300L15 8.500l-4.300 1.700L9 14.500l-1.700-4.300L3 8.500l4.300-1.700z" fill="#fff" /></svg>
              </div>
            </div>
            <div className="w-[12px] border-l border-[#c6c6c6] bg-[#e1e1e1] pl-px pt-[318px]"><div className="h-[222px] bg-[#858585] shadow-[inset_1px_1px_0_#6d6d6d]" /></div>
          </div>
        </div>
      </div>
    </div>
  );
}
